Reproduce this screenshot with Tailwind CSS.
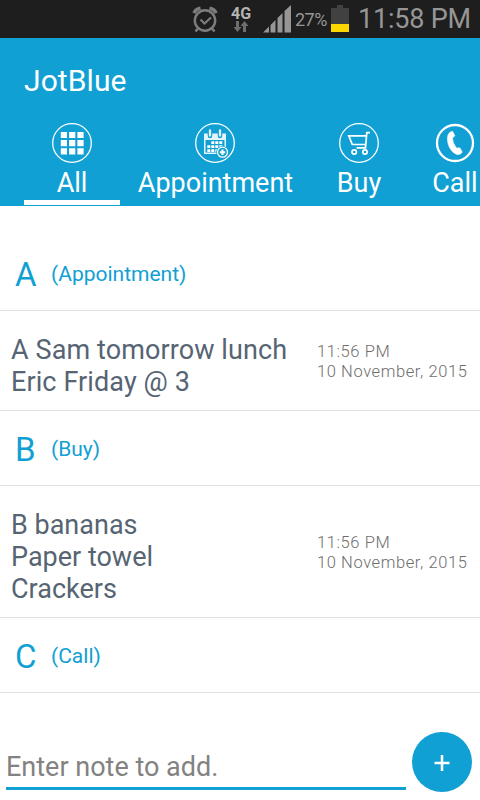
<!DOCTYPE html>
<html lang="en">
<head>
    <meta charset="UTF-8">
    <meta name="viewport" content="width=device-width, initial-scale=1.0">
    <title>JotBlue</title>
    <script src="https://cdn.jsdelivr.net/npm/@tailwindcss/browser@4"></script>
</head>
<body class="bg-white font-['Roboto',sans-serif] whitespace-nowrap">
    <div class="w-[480px] h-[800px] flex flex-col overflow-hidden">
        <!-- Status bar -->
        <div class="h-[38px] shrink-0 bg-[#1e1e1e] flex items-center text-[#969696] pl-[192px]">
            <svg class="w-[26px] h-[28px] shrink-0" viewBox="0 0 26 28" fill="none" stroke="#7d7d7d">
                <circle cx="13" cy="15.5" r="10.2" stroke-width="2.4"/>
                <path d="M8.5 14.5l4 4 6.5-6" stroke-width="2.2"/>
                <path d="M2 8.2Q3.5 4 8.5 3.2M24 8.2Q22.5 4 17.5 3.2" stroke-width="3.6"/>
                <path d="M6 23.5L3.5 26.5M20 23.5l2.5 3" stroke-width="2.5"/>
            </svg>
            <div class="w-[20px] ml-[13px] flex flex-col items-center">
                <span class="text-[16px] leading-[15px] font-bold text-[#b4b4b4]">4G</span>
                <svg class="w-[16px] h-[11px]" viewBox="0 0 16 11" fill="#6e6e6e">
                    <path d="M3 0h3v6h2.5L4.5 11 .5 6H3zM10 11h3V5h2.5l-4-5-4 5H10z"/>
                </svg>
            </div>
            <svg class="w-[28px] h-[28px] ml-[12px] shrink-0" viewBox="0 0 28 28" fill="#969696">
                <path d="M0 27.5L6 21.5v6zM7.5 20l5-5v12.5h-5zM14.5 13l5-5v19.5h-5zM21.5 6L28 0v27.5h-6.5z"/>
            </svg>
            <span class="w-[36px] ml-[4px] text-[18px] tracking-[-0.5px] leading-[38px] pt-px">27%</span>
            <svg class="w-[18px] h-[28px] shrink-0 mt-[-2px]" viewBox="0 0 18 28">
                <path d="M0 4h6V1h6v3h6v16H0z" fill="#414141"/>
                <path d="M0 20h18v8H0z" fill="#ffd700"/>
            </svg>
            <span class="ml-[9px] text-[27px] leading-[38px] tracking-[-0.2px]">11:58 PM</span>
        </div>

        <!-- Header -->
        <header class="h-[168px] shrink-0 bg-[#10a0d3] text-white">
            <h1 class="pl-[24px] pt-[25px] text-[30px] leading-[36px] tracking-[0.1px]">JotBlue</h1>
            <nav class="flex ml-[24px] pt-[24px] w-[480px] text-[27px] leading-[32px] text-center">
                <div class="w-[96px] h-[82px] shrink-0 flex flex-col items-center gap-[4px] border-b-[5px] border-white">
                    <svg class="w-[40px] h-[40px] shrink-0" viewBox="0 0 40 40" fill="none" stroke="#fff">
                        <circle cx="20" cy="20" r="19.3" stroke-width="1.3"/>
                        <path d="M8.8 12h23M8.8 20.2h23M8.8 28.4h23" stroke-width="6.2" stroke-dasharray="6.2 2.1"/>
                    </svg>
                    <span>All</span>
                </div>
                <div class="w-[191px] shrink-0 flex flex-col items-center gap-[4px]">
                    <svg class="w-[40px] h-[40px] mr-px shrink-0" viewBox="0 0 40 40" fill="none" stroke="#fff">
                        <circle cx="20" cy="20" r="19.3" stroke-width="1.3"/>
                        <path d="M9 10.5h22v20.5H9z" fill="#e4f4fb" stroke="none"/>
                        <path d="M10.5 17h19v12.5h-19z" fill="#10a0d3" stroke="none"/>
                        <path d="M16.3 19.7h12M12.3 23.7h16M12.3 27.7h12" stroke-width="2.8" stroke-dasharray="3 1"/>
                        <path d="M15 7.5v5.5M25 7.5v5.5" stroke="#10a0d3" stroke-width="4.5" stroke-linecap="round"/>
                        <path d="M15 7.5v5M25 7.5v5" stroke="#e4f4fb" stroke-width="2.3" stroke-linecap="round"/>
                        <circle cx="27.5" cy="29.2" r="6.3" fill="#10a0d3" stroke="none"/>
                        <circle cx="27.5" cy="29.2" r="5" stroke-width="1.3"/>
                        <path d="M27.5 26.5v5.4M24.8 29.2h5.4" stroke-width="2"/>
                    </svg>
                    <span>Appointment</span>
                </div>
                <div class="w-[96px] shrink-0 flex flex-col items-center gap-[4px]">
                    <svg class="w-[40px] h-[40px] shrink-0" viewBox="0 0 40 40" fill="none" stroke="#fff" stroke-width="1.7">
                        <circle cx="20" cy="20" r="19.3" stroke-width="1.3"/>
                        <path d="M31 9.7h-3.2L26.5 24.8H17.5M27.5 12.8H9.8L13.3 21.5H26.7"/>
                        <circle cx="15.2" cy="29" r="2.2"/>
                        <circle cx="26" cy="29" r="2.2"/>
                    </svg>
                    <span>Buy</span>
                </div>
                <div class="w-[96px] shrink-0 flex flex-col items-center gap-[4px]">
                    <svg class="w-[40px] h-[40px] shrink-0" viewBox="0 0 40 40">
                        <circle cx="20" cy="20" r="18" fill="none" stroke="#fff" stroke-width="2.3"/>
                        <path d="M17.5 8.3L19.8 12.5Q19.5 14 17.5 14.8Q17.3 20 21.8 25.3Q24 24.3 25.2 25.2L27.3 29.2Q25.5 32 22 31.5C15 29 12 20.5 12.5 14.5Q13 9 17.5 8.3z" fill="#fff" stroke="#fff" stroke-width=".6"/>
                    </svg>
                    <span>Call</span>
                </div>
            </nav>
        </header>

        <!-- Notes -->
        <main class="flex-1 pt-[30px] text-[#566473]">
            <div class="h-[75px] flex items-center pt-[4px] pl-[15px] border-b border-[#e1e1e1] text-[#10a0d3]">
                <span class="w-[36px] text-[33px]">A</span>
                <span class="text-[21px]">(Appointment)</span>
            </div>
            <div class="h-[100px] flex items-center justify-between pl-[11px] pr-[12px] border-b border-[#e1e1e1]">
                <p class="pt-[11px] text-[27px] leading-[32px] tracking-[0.1px]">A Sam tomorrow lunch<br>Eric Friday @ 3</p>
                <p class="w-[151px] pt-[2px] text-[16.5px] leading-[20px] tracking-[0.6px] font-light text-[#6e6e6e]">11:56 PM<br>10 November, 2015</p>
            </div>
            <div class="h-[75px] flex items-center pt-[4px] pl-[15px] border-b border-[#e1e1e1] text-[#10a0d3]">
                <span class="w-[36px] text-[33px]">B</span>
                <span class="text-[21px]">(Buy)</span>
            </div>
            <div class="h-[132px] flex items-center justify-between pl-[11px] pr-[12px] border-b border-[#e1e1e1]">
                <p class="pt-[11px] text-[27px] leading-[32px]">B bananas<br>Paper towel<br>Crackers</p>
                <p class="w-[151px] pt-[2px] text-[16.5px] leading-[20px] tracking-[0.6px] font-light text-[#6e6e6e]">11:56 PM<br>10 November, 2015</p>
            </div>
            <div class="h-[75px] flex items-center pt-[4px] pl-[15px] border-b border-[#e1e1e1] text-[#10a0d3]">
                <span class="w-[36px] text-[33px]">C</span>
                <span class="text-[21px]">(Call)</span>
            </div>
        </main>

        <!-- Add note -->
        <form class="flex items-end pl-[6px] pb-[8px] gap-[6px]">
            <input type="text" placeholder="Enter note to add." class="w-[400px] h-[42px] mb-[2px] pb-[2px] border-b-[3px] border-[#10a0d3] text-[27px] placeholder:text-[#828282] outline-none">
            <button type="button" aria-label="Add" class="size-[60px] rounded-full bg-[#10a0d3] flex items-center justify-center">
                <svg class="size-[16px] mt-[2px]" viewBox="0 0 16 16" stroke="#fff" stroke-width="2.5">
                    <path d="M8 0v16M.5 8h15"/>
                </svg>
            </button>
        </form>
    </div>
</body>
</html>
